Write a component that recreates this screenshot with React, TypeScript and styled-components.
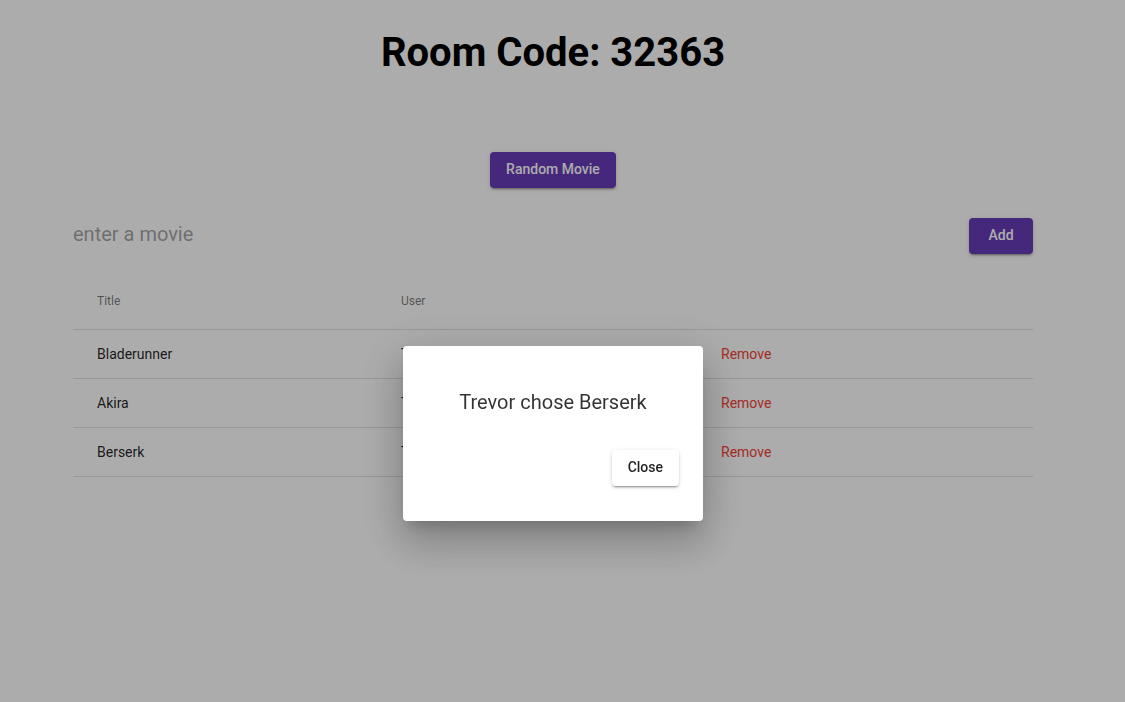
import React from "react";
import styled, { createGlobalStyle } from "styled-components";

const GlobalStyle = createGlobalStyle`
  body {
    margin: 0;
    background: #ffffff;
    font-family: Roboto, "Liberation Sans", Arial, sans-serif;
  }
`;

const movies = [
  { title: "Bladerunner", user: "Trevor" },
  { title: "Akira", user: "Trevor" },
  { title: "Berserk", user: "Trevor" },
];

export default function App() {
  return (
    <>
      <GlobalStyle />
      <Page>
        <Heading>Room Code: 32363</Heading>
        <CenterRow>
          <PrimaryButton>Random Movie</PrimaryButton>
        </CenterRow>
        <Content>
          <InputRow>
            <MovieInput placeholder="enter a movie" />
            <PrimaryButton>Add</PrimaryButton>
          </InputRow>
          <Table>
            <colgroup>
              <col style={{ width: 304 }} />
              <col style={{ width: 320 }} />
              <col />
            </colgroup>
            <thead>
              <tr>
                <HeadCell>Title</HeadCell>
                <HeadCell>User</HeadCell>
                <HeadCell />
              </tr>
            </thead>
            <tbody>
              {movies.map((m) => (
                <tr key={m.title}>
                  <BodyCell>{m.title}</BodyCell>
                  <BodyCell>{m.user}</BodyCell>
                  <BodyCell>
                    <RemoveButton>Remove</RemoveButton>
                  </BodyCell>
                </tr>
              ))}
            </tbody>
          </Table>
        </Content>
      </Page>
      <Backdrop />
      <Dialog>
        <DialogText>Trevor chose Berserk</DialogText>
        <DialogActions>
          <PlainButton>Close</PlainButton>
        </DialogActions>
      </Dialog>
    </>
  );
}

const Page = styled.div`
  max-width: 1106px;
  padding-top: 29px;
`;

const Heading = styled.h1`
  margin: 0;
  text-align: center;
  font-size: 40px;
  font-weight: 700;
  line-height: normal;
  color: #000;
`;

const CenterRow = styled.div`
  display: flex;
  justify-content: center;
  margin-top: 76px;
`;

const PrimaryButton = styled.button`
  min-width: 64px;
  height: 36px;
  padding: 5px 16px 7px;
  border: none;
  border-radius: 4px;
  background: #673ab7;
  color: #fff;
  font-family: inherit;
  font-size: 14px;
  font-weight: 500;
  line-height: 24px;
  box-shadow: 0 3px 1px -2px rgba(0, 0, 0, 0.2), 0 2px 2px 0 rgba(0, 0, 0, 0.14),
    0 1px 5px 0 rgba(0, 0, 0, 0.12);
  cursor: pointer;
`;

const Content = styled.div`
  width: 960px;
  margin: 30px auto 0;
`;

const InputRow = styled.div`
  display: flex;
  align-items: center;
  justify-content: space-between;
`;

const MovieInput = styled.input`
  width: 400px;
  margin-bottom: 4px;
  border: none;
  outline: none;
  background: transparent;
  padding: 0;
  font-family: inherit;
  font-size: 20px;
  color: rgba(0, 0, 0, 0.87);

  &::placeholder {
    color: rgba(0, 0, 0, 0.87);
    opacity: 0.42;
  }
`;

const Table = styled.table`
  width: 100%;
  margin-top: 19px;
  border-collapse: collapse;
  table-layout: fixed;
`;

const HeadCell = styled.th`
  height: 56px;
  padding: 0 24px;
  text-align: left;
  font-size: 12px;
  font-weight: 400;
  color: rgba(0, 0, 0, 0.54);
  border-bottom: 1px solid #e0e0e0;
`;

const BodyCell = styled.td`
  height: 48px;
  padding: 0 24px;
  font-size: 14px;
  color: rgba(0, 0, 0, 0.87);
  border-bottom: 1px solid #e0e0e0;
`;

const RemoveButton = styled.button`
  padding: 0;
  border: none;
  background: none;
  font-family: inherit;
  font-size: 14px;
  font-weight: 400;
  color: #f44336;
  cursor: pointer;
`;

const Backdrop = styled.div`
  position: fixed;
  inset: 0;
  background: rgba(0, 0, 0, 0.325);
`;

const Dialog = styled.div`
  position: fixed;
  top: 346px;
  left: 403px;
  width: 300px;
  box-sizing: border-box;
  padding: 41px 24px 35px;
  background: #fff;
  border-radius: 4px;
  box-shadow: 0 11px 15px -7px rgba(0, 0, 0, 0.2), 0 24px 38px 3px rgba(0, 0, 0, 0.14),
    0 9px 46px 8px rgba(0, 0, 0, 0.12);
`;

const DialogText = styled.p`
  margin: 0;
  text-align: center;
  font-size: 20px;
  line-height: 30px;
  color: rgba(0, 0, 0, 0.8);
`;

const DialogActions = styled.div`
  display: flex;
  justify-content: flex-end;
  margin-top: 33px;
`;

const PlainButton = styled(PrimaryButton)`
  background: #fff;
  color: rgba(0, 0, 0, 0.87);
`;
